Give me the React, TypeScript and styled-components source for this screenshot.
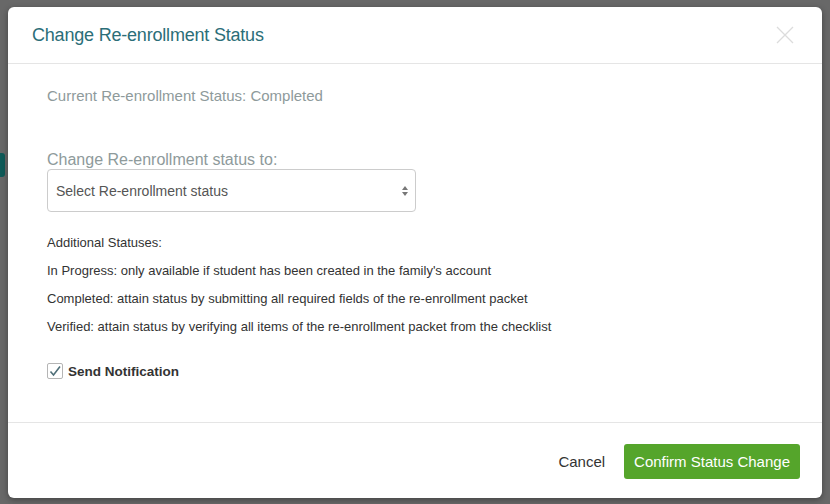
import styled, { createGlobalStyle } from "styled-components";

const GlobalStyle = createGlobalStyle`
  body {
    margin: 0;
    font-family: "Liberation Sans", Arial, sans-serif;
  }
`;

const Backdrop = styled.div`
  position: relative;
  width: 830px;
  height: 504px;
  background-color: #686868;
  padding: 7px 8px 6px 8px;
  box-sizing: border-box;
  overflow: hidden;
`;

const SideTab = styled.div<{ top: number }>`
  position: absolute;
  left: 0;
  top: ${(p) => p.top}px;
  width: 5px;
  height: 24px;
  background-color: #0f5a58;
  border-radius: 0 3px 3px 0;
`;

const Modal = styled.div`
  position: relative;
  width: 814px;
  height: 491px;
  background: #fff;
  border-radius: 6px;
  box-shadow: 0 2px 6px rgba(0, 0, 0, 0.35);
  display: flex;
  flex-direction: column;
`;

const Header = styled.div`
  height: 57px;
  border-bottom: 1px solid #e5e5e5;
  display: flex;
  align-items: center;
  justify-content: space-between;
  padding: 0 28px 0 24px;
  box-sizing: border-box;
`;

const Title = styled.h4`
  margin: 0;
  font-size: 18px;
  font-weight: 400;
  color: #2b6e78;
  letter-spacing: -0.2px;
`;

const Close = styled.button`
  border: none;
  background: none;
  padding: 0;
  width: 18px;
  height: 18px;
  cursor: pointer;
`;

const Body = styled.div`
  flex: 1;
  padding: 23px 39px 0 39px;
  display: flex;
  flex-direction: column;
`;

const Muted = styled.p`
  margin: 0;
  font-size: 15px;
  line-height: 18px;
  color: #8e9a9b;
`;

const FieldLabel = styled(Muted)`
  font-size: 16px;
  margin-top: 46px;
  margin-bottom: 0;
`;

const SelectBox = styled.div`
  width: 369px;
  height: 43px;
  border: 1px solid #cccccc;
  border-radius: 4px;
  box-sizing: border-box;
  display: flex;
  align-items: center;
  justify-content: space-between;
  padding: 0 6px 0 8px;
  font-size: 14px;
  color: #555;
`;

const Info = styled.div`
  margin-top: 23px;
  display: flex;
  flex-direction: column;
  gap: 13px;
`;

const InfoLine = styled.p`
  margin: 0;
  font-size: 13px;
  line-height: 15px;
  color: #333;
`;

const CheckRow = styled.label`
  margin-top: 29px;
  display: flex;
  align-items: center;
  gap: 5px;
  font-size: 13.5px;
  font-weight: 700;
  color: #333;
`;

const CheckBox = styled.span`
  width: 16px;
  height: 16px;
  border: 1px solid #b5b5b5;
  border-radius: 2px;
  box-sizing: border-box;
  display: flex;
  align-items: center;
  justify-content: center;
  background: #fff;
`;

const Footer = styled.div`
  height: 76px;
  border-top: 1px solid #e5e5e5;
  display: flex;
  align-items: center;
  justify-content: flex-end;
  gap: 19px;
  padding: 2px 22px 0 0;
  box-sizing: border-box;
`;

const TextButton = styled.button`
  border: none;
  background: none;
  font-family: inherit;
  font-size: 15px;
  color: #333;
  padding: 0;
  cursor: pointer;
`;

const PrimaryButton = styled.button`
  height: 35px;
  padding: 0 10px;
  border: none;
  border-radius: 3px;
  background-color: #55a52b;
  color: #fff;
  font-family: inherit;
  font-size: 15px;
  cursor: pointer;
`;

const lines = [
  "Additional Statuses:",
  "In Progress: only available if student has been created in the family's account",
  "Completed: attain status by submitting all required fields of the re-enrollment packet",
  "Verified: attain status by verifying all items of the re-enrollment packet from the checklist",
];

function App() {
  return (
    <>
      <GlobalStyle />
      <Backdrop>
        <SideTab top={153} />
        <Modal>
          <Header>
            <Title>Change Re-enrollment Status</Title>
            <Close aria-label="close">
              <svg width="18" height="18" viewBox="0 0 18 18">
                <path d="M1 1L17 17M17 1L1 17" stroke="#dcdcdc" strokeWidth="1.3" />
              </svg>
            </Close>
          </Header>
          <Body>
            <Muted>Current Re-enrollment Status: Completed</Muted>
            <FieldLabel>Change Re-enrollment status to:</FieldLabel>
            <SelectBox>
              <span>Select Re-enrollment status</span>
              <svg width="8" height="14" viewBox="0 0 8 14">
                <path d="M4 2L7 6H1Z" fill="#777" />
                <path d="M4 12L7 8H1Z" fill="#777" />
              </svg>
            </SelectBox>
            <Info>
              {lines.map((l) => (
                <InfoLine key={l}>{l}</InfoLine>
              ))}
            </Info>
            <CheckRow>
              <CheckBox>
                <svg width="14" height="14" viewBox="0 0 14 14">
                  <path d="M2.5 7.5L5.5 11L12 2.5" stroke="#4f6f78" strokeWidth="1.6" fill="none" />
                </svg>
              </CheckBox>
              Send Notification
            </CheckRow>
          </Body>
          <Footer>
            <TextButton>Cancel</TextButton>
            <PrimaryButton>Confirm Status Change</PrimaryButton>
          </Footer>
        </Modal>
      </Backdrop>
    </>
  );
}

export default App;
